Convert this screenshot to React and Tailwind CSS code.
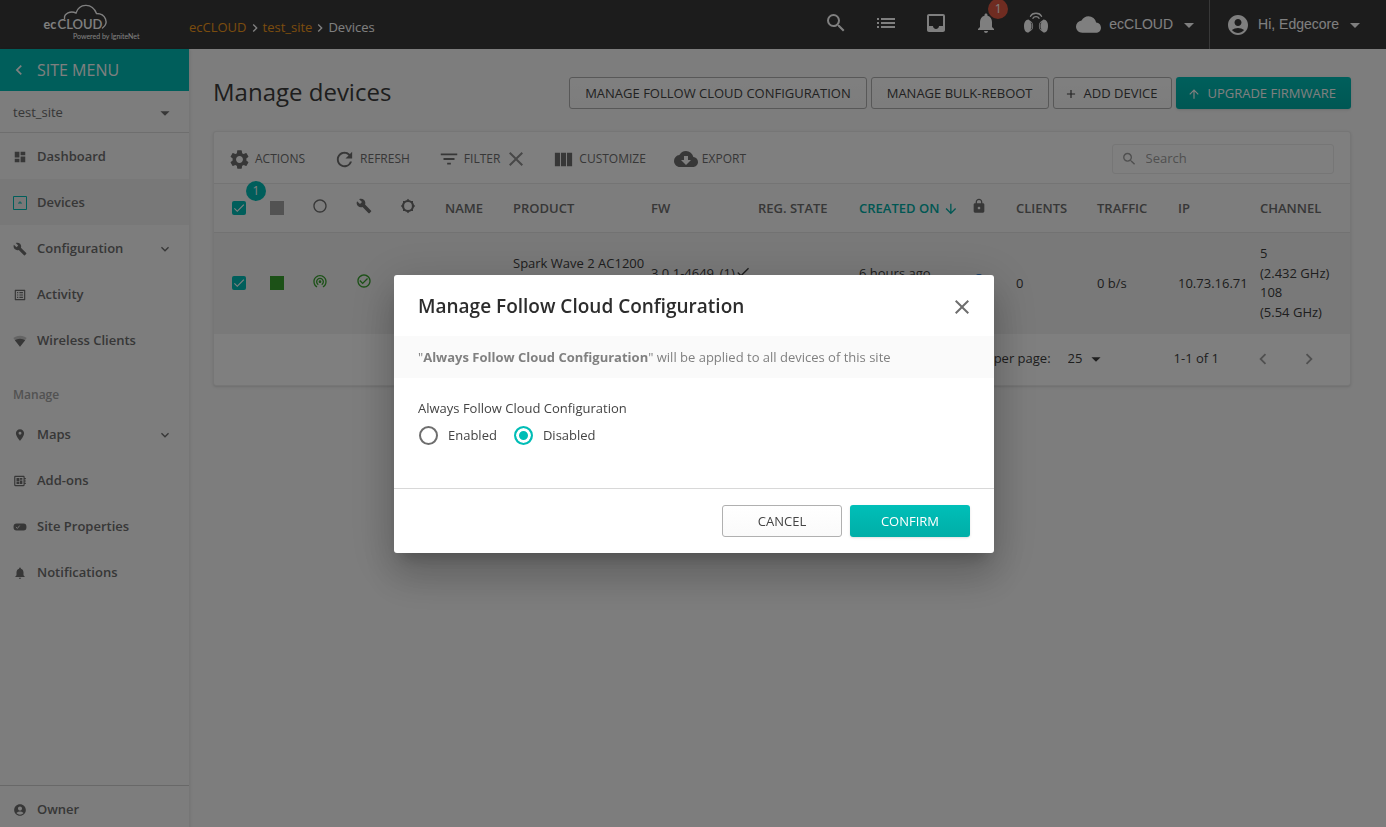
import React from "react";
import {
  MdSearch, MdList, MdInbox, MdNotifications, MdCloud, MdArrowDropDown, MdAccountCircle,
  MdChevronLeft, MdChevronRight, MdDashboard, MdBuild, MdListAlt, MdExpandMore, MdLocationOn,
  MdAdd, MdArrowUpward, MdSettings, MdRefresh, MdFilterList, MdClose, MdViewColumn, MdCloudDownload,
  MdRadioButtonUnchecked, MdArrowDownward, MdLock, MdCheck, MdCheckCircleOutline, MdWifiTethering,
  MdOutlineDeveloperBoard,
} from "react-icons/md";

const teal = "bg-linear-to-b from-[#00bfb8] to-[#00aea7]";

function Logo() {
  return (
    <svg width="100" height="38" viewBox="0 0 100 38" className="ml-[42px] mt-[3px] shrink-0" role="img" aria-label="ecCLOUD">
      <path d="M22.500 15.500C22 10.500 28.500 7.500 34 10C37 .5 50 -1 54.500 10.500C64 10.500 67 20.500 60.500 25" fill="none" stroke="#fff" strokeWidth="1.400" strokeLinecap="round" />
      <g fill="#fff" fontFamily="Lato, sans-serif">
        <text x="1.500" y="26" fontSize="12.500" fontWeight="700">ec</text>
        <text x="15.500" y="26" fontSize="13" fontWeight="600">CLOUD</text>
        <text x="31" y="36" fontSize="7">Powered by IgniteNet</text>
      </g>
    </svg>
  );
}

function Support() {
  return (
    <svg width="24" height="22" viewBox="0 0 24 22" aria-hidden="true">
      <g fill="#fff">
        <path d="M4.500 7.500C1.500 7.500 0 10.500 0 14C0 18 1.500 20.800 4.500 20.500L8 17.800C9.500 16 9.500 12 8 10.200Z" />
        <path d="M19.500 7.500C22.500 7.500 24 10.500 24 14C24 18 22.500 20.800 19.500 20.500L16 17.800C14.500 16 14.500 12 16 10.200Z" />
      </g>
      <path d="M6.500 4.300C8.500 .3 15.500 .3 17.500 4.300M9 6.300C10 4 14 4 15 6.300" fill="none" stroke="#fff" strokeWidth="1.400" strokeLinecap="round" />
      <path d="M7 10.500C8.200 12.500 8.200 15.500 7 17.500M17 10.500C15.800 12.500 15.800 15.500 17 17.500" fill="none" stroke="#383838" strokeWidth=".8" />
    </svg>
  );
}

function NavItem({ icon, label, active, expandable }) {
  return (
    <a href="#" className={`flex h-[46px] items-center pl-[13px] pr-4 pt-0.5 text-[13px] font-semibold text-[#6e6e6e] ${active ? "bg-[#f0f0f0]" : ""}`}>
      <span className="flex w-6 shrink-0">{icon}</span>
      <span className="grow">{label}</span>
      {expandable && <MdExpandMore size={16} />}
    </a>
  );
}

const WifiIcon = () => (
  <svg width="14" height="14" viewBox="0 0 24 24" fill="currentColor" aria-hidden="true">
    <path opacity=".35" d="M12 3C7 3 3 5 .5 7L12 22 23.500 7C21 5 17 3 12 3Z" />
    <path d="M12 8C8 8 5.500 9.300 3.200 10.800L12 22 20.800 10.800C18.500 9.300 16 8 12 8Z" />
  </svg>
);
const DevicesIcon = () => (
  <svg width="14" height="14" viewBox="0 0 14 14" fill="none" stroke="#00bdb6" aria-hidden="true">
    <path d="M.5 .5H13.500V13.500H.5Z" />
    <path d="M5.500 7.500Q7 4 8.500 7.500M7 6.500V8" />
  </svg>
);
const PropsIcon = () => (
  <svg width="14" height="14" viewBox="0 0 24 24" aria-hidden="true">
    <rect x="1" y="6" width="22" height="12" rx="5" fill="currentColor" />
    <path d="M5 12l2.500 2.500 4-5" fill="none" stroke="#fafafa" strokeWidth="1.500" />
  </svg>
);

function GearOutline() {
  return (
    <svg width="16" height="16" viewBox="0 0 16 16" className="ml-[10px]" aria-hidden="true">
      <circle cx="8" cy="8" r="5" fill="none" stroke="currentColor" strokeWidth="2.200" />
      <g fill="currentColor">
        <path d="M6.200 2.700 8 .8 9.800 2.700ZM6.200 13.300 8 15.200 9.800 13.300ZM2.700 6.200.8 8 2.700 9.800ZM13.300 6.200 15.200 8 13.300 9.800Z" />
        <path d="M3 5.600V3H5.600ZM10.400 3H13V5.600ZM13 10.400V13H10.400ZM5.600 13H3V10.400Z" />
      </g>
    </svg>
  );
}

function Check({ label }) {
  return (
    <label className="relative flex size-[14px]">
      <input type="checkbox" defaultChecked aria-label={label} className="size-[14px] appearance-none rounded-[2px] bg-[#00bdb6]" />
      <MdCheck size={14} className="pointer-events-none absolute inset-0 text-white" />
    </label>
  );
}

function Tool({ icon, children }) {
  return (
    <button className="flex items-center gap-1 text-[12px] font-medium text-[#6e6e6e]">{icon}{children}</button>
  );
}

function OutlineButton({ children, className = "" }) {
  return (
    <button className={`flex h-8 items-center justify-center rounded-[3px] border border-[#b0b0b0] bg-linear-to-b from-white to-[#fafafa] pt-0.5 text-[13px] text-[#444] ${className}`}>{children}</button>
  );
}

export default function App() {
  return (
    <div className="flex min-h-screen flex-col bg-[#fafafa] font-['Open_Sans',sans-serif] text-[13px] text-[#3c3c3c]">
      <header className="flex h-[49px] items-center bg-[#383838] text-white">
        <div className="flex w-[189px] shrink-0 self-stretch"><Logo /></div>
        <nav className="flex grow items-center pt-1.5 text-[13px] text-[#f49a1c]" aria-label="Breadcrumb">
          <a href="#">ecCLOUD</a>
          <MdChevronRight size={16} className="text-white" />
          <a href="#">test_site</a>
          <MdChevronRight size={16} className="text-white" />
          <span className="text-white">Devices</span>
        </nav>
        <div className="flex items-center gap-[26px] pb-1">
          <button aria-label="Search"><MdSearch size={24} /></button>
          <button aria-label="List"><MdList size={24} /></button>
          <button aria-label="Inbox"><MdInbox size={24} /></button>
          <button aria-label="Notifications" className="relative">
            <MdNotifications size={24} />
            <span className="absolute -top-3 left-[14px] flex size-5 items-center justify-center rounded-full bg-[#df5843] text-[12px]">1</span>
          </button>
          <button aria-label="Support"><Support /></button>
        </div>
        <button className="flex h-full items-center pl-7 pr-2 font-['Liberation_Sans',sans-serif] text-[14px]">
          <MdCloud size={25} /><span className="pl-2 pr-1">ecCLOUD</span><MdArrowDropDown size={24} />
        </button>
        <button className="flex h-full items-center border-l border-[#707070] pl-4 pr-[19px] font-['Liberation_Sans',sans-serif] text-[14px]">
          <MdAccountCircle size={24} /><span className="pl-2 pr-1">Hi, Edgecore</span><MdArrowDropDown size={24} />
        </button>
      </header>

      <div className="flex grow">
        <aside className="flex w-[190px] shrink-0 flex-col border-r border-[#ececec] shadow-sm">
          <button className="flex h-[42px] items-center bg-[#00bdb6] pl-[9px] text-[16px] text-white">
            <MdChevronLeft size={20} /><span className="pl-2">SITE MENU</span>
          </button>
          <button className="flex h-[42px] items-center justify-between border-b border-[#dcdcdc] px-[13px] pt-0.5 text-[#6e6e6e]">
            test_site<MdArrowDropDown size={22} />
          </button>
          <NavItem icon={<MdDashboard size={14} />} label="Dashboard" />
          <NavItem icon={<DevicesIcon />} label="Devices" active />
          <NavItem icon={<MdBuild size={14} />} label="Configuration" expandable />
          <NavItem icon={<MdListAlt size={14} />} label="Activity" />
          <NavItem icon={<WifiIcon />} label="Wireless Clients" />
          <h2 className="px-[13px] pb-[6px] pt-[22px] text-[12px] font-semibold leading-5 text-[#a4a4a4]">Manage</h2>
          <NavItem icon={<MdLocationOn size={14} />} label="Maps" expandable />
          <NavItem icon={<MdOutlineDeveloperBoard size={14} />} label="Add-ons" />
          <NavItem icon={<PropsIcon />} label="Site Properties" />
          <NavItem icon={<MdNotifications size={14} />} label="Notifications" />
          <div className="mt-auto h-[42px] border-t border-[#d0d0d0]">
            <NavItem icon={<MdAccountCircle size={14} />} label="Owner" />
          </div>
        </aside>

        <main className="min-w-0 grow pl-[23px] pr-[35px] pt-7">
          <div className="flex items-center justify-between">
            <h1 className="pb-0.5 text-[24px] leading-[30px] text-[#3c3c3c]">Manage devices</h1>
            <div className="flex gap-1">
              <OutlineButton className="px-[15px]">MANAGE FOLLOW CLOUD CONFIGURATION</OutlineButton>
              <OutlineButton className="px-[15px]">MANAGE BULK-REBOOT</OutlineButton>
              <OutlineButton className="gap-[6px] pl-[10px] pr-[14px]"><MdAdd size={14} />ADD DEVICE</OutlineButton>
              <button className={`flex h-8 items-center gap-[6px] rounded-[3px] pl-[11px] pr-[15px] pt-0.5 text-white shadow-sm ${teal}`}><MdArrowUpward size={14} />UPGRADE FIRMWARE</button>
            </div>
          </div>

          <section className="mt-[22px] rounded-[3px] border border-[#ececec] bg-white shadow">
            <div className="flex h-[52px] items-center border-b border-[#e8e8e8] pl-[14px] pr-4 pt-[3px]">
              <div className="flex grow items-center gap-7">
                <Tool icon={<MdSettings size={23} />}>ACTIONS</Tool>
                <Tool icon={<MdRefresh size={23} />}>REFRESH</Tool>
                <Tool icon={<MdFilterList size={22} />}>FILTER<MdClose size={24} className="-mr-1 text-[#909090]" /></Tool>
                <Tool icon={<MdViewColumn size={23} />}>CUSTOMIZE</Tool>
                <Tool icon={<MdCloudDownload size={24} />}>EXPORT</Tool>
              </div>
              <label className="flex h-[30px] w-[222px] items-center rounded-[3px] border border-[#ececec] pl-2 text-[#a0a0a0]">
                <MdSearch size={18} />
                <input type="text" aria-label="Search" placeholder="Search" className="w-full min-w-0 pl-2 outline-none placeholder:text-[#a0a0a0]" />
              </label>
            </div>
            <table className="w-full table-fixed text-left">
              <colgroup>
                <col className="w-[50px]" /><col className="w-[38px]" /><col className="w-[44px]" /><col className="w-[44px]" /><col className="w-[44px]" />
                <col className="w-[68px]" /><col className="w-[139px]" /><col className="w-[106px]" /><col className="w-[102px]" /><col className="w-[110px]" />
                <col className="w-[47px]" /><col className="w-[81px]" /><col className="w-[81px]" /><col className="w-[82px]" /><col />
              </colgroup>
              <thead>
                <tr className="h-12 border-b border-[#e4e4e4] bg-[#fafafa] text-[#6e6e6e] [&>th]:whitespace-nowrap [&>th]:font-semibold">
                  <th className="pl-[18px]">
                    <span className="relative flex">
                      <Check label="Select all devices" />
                      <span className="absolute -top-5 left-[14px] flex size-5 items-center justify-center rounded-full bg-[#00bdb6] text-[12px] font-normal text-white">1</span>
                    </span>
                  </th>
                  <th><span className="ml-[6px] block size-[14px] bg-[#a4a4a4]" /></th>
                  <th className="pb-1"><MdRadioButtonUnchecked size={16} className="ml-[10px]" /></th>
                  <th className="pb-1"><MdBuild size={16} className="ml-[10px]" /></th>
                  <th className="pb-1"><GearOutline /></th>
                  <th className="pl-[11px] pt-0.5">NAME</th>
                  <th className="pl-[11px] pt-0.5">PRODUCT</th>
                  <th className="pl-[10px] pt-0.5">FW</th>
                  <th className="pl-[11px] pt-0.5">REG. STATE</th>
                  <th className="pl-[10px] pt-0.5 text-[#00aea7]"><span className="flex items-center gap-1">CREATED ON<MdArrowDownward size={18} /></span></th>
                  <th className="pb-1"><MdLock size={16} className="ml-[12px]" /></th>
                  <th className="pl-[10px] pt-0.5">CLIENTS</th>
                  <th className="pl-[10px] pt-0.5">TRAFFIC</th>
                  <th className="pl-[10px] pt-0.5">IP</th>
                  <th className="pl-[10px] pt-0.5">CHANNEL</th>
                </tr>
              </thead>
              <tbody>
                <tr className="h-[102px] bg-[#f2f2f2]">
                  <td className="pl-[18px]"><Check label="Select device" /></td>
                  <td><span className="ml-[6px] block size-[14px] bg-[#38a32e]" /></td>
                  <td className="pb-1"><MdWifiTethering size={16} className="ml-[10px] text-[#38a32e]" /></td>
                  <td className="pb-1"><MdCheckCircleOutline size={16} className="ml-[10px] text-[#38a32e]" /></td>
                  <td />
                  <td />
                  <td className="whitespace-nowrap pl-[11px]">Spark Wave 2 AC1200<br />&nbsp;<br />&nbsp;</td>
                  <td className="whitespace-nowrap pl-[10px]"><span className="flex h-5 items-start">3.0.1-4649_(1)<MdCheck size={16} className="shrink-0" /></span>&nbsp;</td>
                  <td />
                  <td className="pl-[10px]">6 hours ago<br />&nbsp;</td>
                  <td className="pb-2"><span className="ml-[15px] block size-[10px] rounded-full bg-[#2878d0]" /></td>
                  <td className="pl-[10px]">0</td>
                  <td className="pl-[10px]">0 b/s</td>
                  <td className="pl-[10px]">10.73.16.71</td>
                  <td className="whitespace-nowrap pl-[10px]">5<br />(2.432 GHz)<br />108<br />(5.54 GHz)</td>
                </tr>
              </tbody>
            </table>
            <footer className="flex h-[51px] items-center justify-end pb-0.5 pr-[30px]">
              <label htmlFor="rows">Rows per page:</label>
              <span className="relative ml-[17px] mr-[70px] flex items-center">
                <select id="rows" className="w-9 appearance-none outline-none"><option>25</option></select>
                <MdArrowDropDown size={22} className="pointer-events-none absolute left-[17px]" />
              </span>
              <span>1-1 of 1</span>
              <button aria-label="Previous page" className="ml-[33px] text-[#a0a0a0]"><MdChevronLeft size={22} /></button>
              <button aria-label="Next page" className="ml-6 text-[#a0a0a0]"><MdChevronRight size={22} /></button>
            </footer>
          </section>
        </main>
      </div>

      <div className="fixed inset-0 flex items-center justify-center bg-black/50 pl-0.5 pt-px">
        <div role="dialog" aria-labelledby="dialog-title" className="w-[600px] rounded-[3px] bg-white shadow-[0_11px_15px_-7px_rgba(0,0,0,0.2),0_24px_38px_3px_rgba(0,0,0,0.14),0_9px_46px_8px_rgba(0,0,0,0.12)]">
          <div className="flex h-[61px] items-center justify-between px-6 pt-0.5">
            <h2 id="dialog-title" className="text-[19px] font-semibold text-[#2c2c2c]">Manage Follow Cloud Configuration</h2>
            <button aria-label="Close" className="-mr-1 text-[#6e6e6e]"><MdClose size={24} /></button>
          </div>
          <p className="bg-[#fafafa] px-6 py-[11px] leading-5 text-[#808080]">"<b>Always Follow Cloud Configuration</b>" will be applied to all devices of this site</p>
          <fieldset className="px-6 pb-[43px] pt-[21px] text-[#444]">
            <legend className="contents">Always Follow Cloud Configuration</legend>
            <div className="mt-[7px] flex items-center gap-4">
              <label className="flex items-center gap-[10px]"><input type="radio" name="follow" className="ml-px size-[19px] appearance-none rounded-full border-2 border-[#6e6e6e]" />Enabled</label>
              <label className="flex items-center gap-[10px]"><input type="radio" name="follow" defaultChecked className="ml-px size-[19px] appearance-none rounded-full border-2 border-[#00bdb6] bg-[#00bdb6] shadow-[inset_0_0_0_3px_white]" />Disabled</label>
            </div>
          </fieldset>
          <div className="flex justify-end gap-2 border-t border-[#d8d8d8] px-6 py-4">
            <OutlineButton className="w-[120px]">CANCEL</OutlineButton>
            <button className={`h-8 w-[120px] rounded-[3px] pt-0.5 text-white shadow-sm ${teal}`}>CONFIRM</button>
          </div>
        </div>
      </div>
    </div>
  );
}
